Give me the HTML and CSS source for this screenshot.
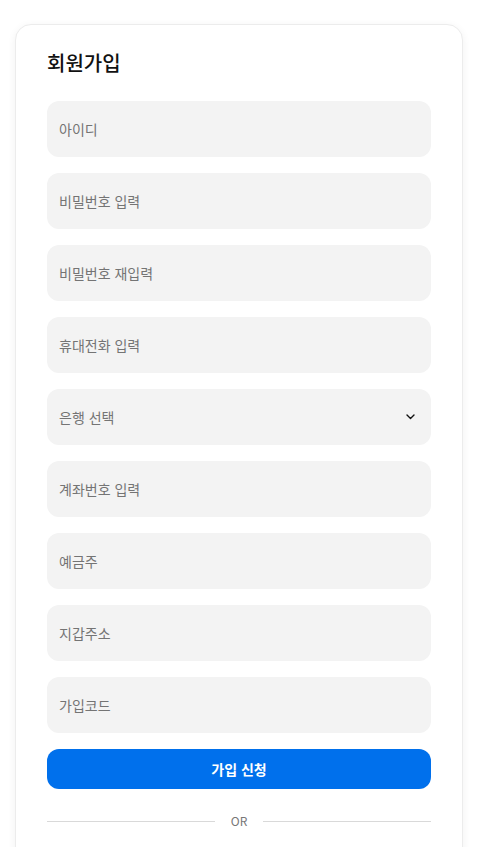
FILE: index.html
```html
<!DOCTYPE html>
<html lang="ko">
<head>
<meta charset="utf-8">
<link rel="stylesheet" href="styles.css">
</head>
<body>
<div class="page">
  <div class="card">
    <h1 class="title">회원가입</h1>
    <form class="form">
      <div class="field"><input class="input" type="text" placeholder="아이디"></div>
      <div class="field"><input class="input" type="password" placeholder="비밀번호 입력"></div>
      <div class="field"><input class="input" type="password" placeholder="비밀번호 재입력"></div>
      <div class="field"><input class="input" type="text" placeholder="휴대전화 입력"></div>
      <div class="field select">
        <span class="select-label">은행 선택</span>
        <svg class="chevron" width="9" height="6" viewBox="0 0 9 6"><path d="M1 1l3.5 3.5L8 1" fill="none" stroke="#111" stroke-width="1.4" stroke-linecap="round" stroke-linejoin="round"/></svg>
      </div>
      <div class="field"><input class="input" type="text" placeholder="계좌번호 입력"></div>
      <div class="field"><input class="input" type="text" placeholder="예금주"></div>
      <div class="field"><input class="input" type="text" placeholder="지갑주소"></div>
      <div class="field"><input class="input" type="text" placeholder="가입코드"></div>
      <button class="submit" type="button">가입 신청</button>
    </form>
    <div class="divider"><span class="line"></span><span class="or">OR</span><span class="line"></span></div>
  </div>
</div>
</body>
</html>
```
FILE: styles.css
```css
* { box-sizing: border-box; }
html, body { margin: 0; padding: 0; background: #fff; }
body { font-family: "Noto Sans CJK KR", "Noto Sans", sans-serif; color: #111; }
.page { padding: 24px 26px 0 15px; }
.card {
  width: 448px;
  border: 1px solid #ececec;
  border-radius: 16px;
  box-shadow: 0 2px 8px rgba(0,0,0,0.06);
  padding: 24px 31px 40px 31px;
  background: #fff;
}
.title {
  margin: 0 0 24px 0;
  font-size: 20px;
  line-height: 28px;
  font-weight: 500;
  color: #111;
}
.form { display: flex; flex-direction: column; gap: 16px; }
.field {
  height: 56px;
  background: #f3f3f3;
  border-radius: 12px;
  display: flex;
  align-items: center;
}
.input {
  width: 100%;
  height: 100%;
  border: 0;
  outline: none;
  background: transparent;
  padding: 0 12px;
  font-family: inherit;
  font-size: 14px;
  color: #111;
}
.input::placeholder { color: #747474; }
.select { justify-content: space-between; padding: 0 16px 0 12px; }
.select-label { font-size: 14px; color: #747474; }
.chevron { display: block; }
.submit {
  height: 40px;
  border: 0;
  border-radius: 12px;
  background: #0070ec;
  color: #fff;
  font-family: inherit;
  font-size: 14px;
  font-weight: 600;
}
.divider { display: flex; align-items: center; gap: 16px; margin-top: 24px; height: 16px; }
.line { flex: 1; height: 1px; background: #d9d9d9; }
.or { font-size: 12px; color: #777; line-height: 16px; }
```
